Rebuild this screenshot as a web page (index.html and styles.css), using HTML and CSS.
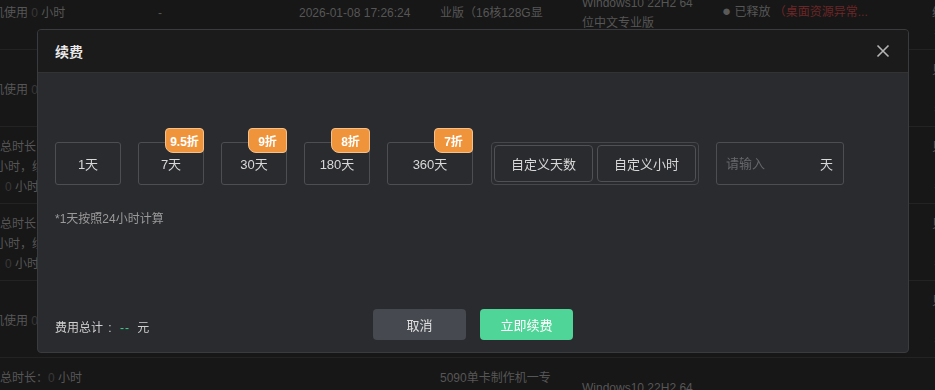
FILE: index.html
```html
<!DOCTYPE html>
<html lang="zh-CN">
<head>
    <meta charset="UTF-8">
    <meta name="viewport" content="width=device-width, initial-scale=1.0">
    <title>续费</title>
    <link rel="stylesheet" href="styles.css">
</head>
<body>
    <div class="table">
        <div class="row">
            <div class="cell c1"><span class="ln ln-cut">机使用 <span class="zero">0</span> 小时</span></div>
            <div class="cell c2">-</div>
            <div class="cell c3">2026-01-08 17:26:24</div>
            <div class="cell c4">5090单卡制作机一专<br>业版（16核128G显<br>&nbsp;</div>
            <div class="cell c5">Windows10 22H2 64<br>位中文专业版</div>
            <div class="cell c6"><span class="dot">●</span> 已释放 <span class="red">（桌面资源异常...</span></div>
            <div class="cell c7">贝<br>续<br>彳</div>
        </div>
        <div class="row">
            <div class="cell c1"><span class="ln ln-cut">机使用 <span class="zero">0</span> 小时</span></div>
            <div class="cell c2"></div>
            <div class="cell c3"></div>
            <div class="cell c4"></div>
            <div class="cell c5"></div>
            <div class="cell c6"></div>
            <div class="cell c7">贝<br>卜<br>彳</div>
        </div>
        <div class="row">
            <div class="cell c1">
                <span class="ln">总时长：<span class="zero">0</span> 小时</span>
                <span class="ln ln-cut2">小时，续费 0 小时</span>
                <span class="ln ln-in"><span class="zero">0</span> 小时，已使用</span>
            </div>
            <div class="cell c2"></div>
            <div class="cell c3"></div>
            <div class="cell c4"></div>
            <div class="cell c5"></div>
            <div class="cell c6"></div>
            <div class="cell c7">贝<br>卜<br>彳</div>
        </div>
        <div class="row">
            <div class="cell c1">
                <span class="ln">总时长：<span class="zero">0</span> 小时</span>
                <span class="ln ln-cut2">小时，续费 0 小时</span>
                <span class="ln ln-in"><span class="zero">0</span> 小时，已使用</span>
            </div>
            <div class="cell c2"></div>
            <div class="cell c3"></div>
            <div class="cell c4"></div>
            <div class="cell c5"></div>
            <div class="cell c6"></div>
            <div class="cell c7">贝<br>卜<br>彳</div>
        </div>
        <div class="row">
            <div class="cell c1"><span class="ln ln-cut">机使用 <span class="zero">0</span> 小时</span></div>
            <div class="cell c2"></div>
            <div class="cell c3"></div>
            <div class="cell c4"></div>
            <div class="cell c5"></div>
            <div class="cell c6"></div>
            <div class="cell c7">贝<br>卜<br>彳</div>
        </div>
        <div class="row">
            <div class="cell c1">
                <span class="ln">总时长：<span class="zero">0</span> 小时</span>
                <span class="ln ln-cut2">时，续费 0 小时</span>
                <span class="ln ln-in"><span class="zero">0</span> 小时，已使用</span>
            </div>
            <div class="cell c2"></div>
            <div class="cell c3"></div>
            <div class="cell c4">5090单卡制作机一专<br>业版（16核128G显<br>存）</div>
            <div class="cell c5">Windows10 22H2 64<br>位中文专业版</div>
            <div class="cell c6"><span class="dot">●</span> <span class="red">已释放（1台资源异常）</span></div>
            <div class="cell c7">贝</div>
        </div>
    </div>

    <div class="mask">
        <div class="dialog">
            <div class="dialog-header">
                <span class="dialog-title">续费</span>
                <button class="close">
                    <svg width="14" height="14" viewBox="0 0 14 14"><path d="M1.5 1.5 L12.5 12.5 M12.5 1.5 L1.5 12.5" stroke="#b5b5b5" stroke-width="1.6" fill="none"/></svg>
                </button>
            </div>

            <div class="dialog-body">
                <div class="options">
                    <div class="opt">1天</div>
                    <div class="opt">7天<span class="badge">9.5折</span></div>
                    <div class="opt">30天<span class="badge">9折</span></div>
                    <div class="opt">180天<span class="badge">8折</span></div>
                    <div class="opt opt-wide">360天<span class="badge">7折</span></div>
                    <div class="custom">
                        <div class="custom-btn">自定义天数</div>
                        <div class="custom-btn">自定义小时</div>
                    </div>
                    <div class="input-box">
                        <input type="text" placeholder="请输入">
                        <span class="unit">天</span>
                    </div>
                </div>
                <p class="note">*1天按照24小时计算</p>
            </div>

            <div class="dialog-footer">
                <div class="total">费用总计 : <span class="dash">--</span> 元</div>
                <div class="actions">
                    <button class="btn btn-cancel">取消</button>
                    <button class="btn btn-ok">立即续费</button>
                </div>
            </div>
        </div>
    </div>
</body>
</html>
```

FILE: styles.css
```css
body {
    margin: 0;
    width: 935px;
    height: 390px;
    overflow: hidden;
    background-color: #171717;
    font-family: "Liberation Sans", "Noto Sans CJK SC", sans-serif;
}
.table {
    margin-top: -27px;
}
.row {
    display: grid;
    grid-template-columns: 140px 159px 141px 142px 140px 207px 40px;
    height: 77px;
    border-bottom: 1px solid #232323;
    box-sizing: border-box;
    color: #565656;
    font-size: 12px;
    line-height: 20px;
}
.cell {
    display: flex;
    flex-direction: column;
    justify-content: center;
    white-space: nowrap;
    padding-top: 4px;
}
.c2 { padding-left: 18px; }
.c7 { padding-left: 3px; }
.ln { display: block; }
.ln-cut { margin-left: -8px; }
.ln-cut2 { margin-left: -4px; }
.ln-in { margin-left: 5px; }
.zero { color: #383838; }
.dot { color: #5a5a5a; font-size: 15px; }
.red { color: #6b2626; }
.c6 { display: block; align-self: center; padding-top: 0; }

.mask {
    position: fixed;
    inset: 0;
    padding: 29px 26px 0 37px;
}
.dialog {
    width: 872px;
    height: 324px;
    box-sizing: border-box;
    display: flex;
    flex-direction: column;
    background-color: #2a2b2f;
    border: 1px solid #3a3b3e;
    border-radius: 4px;
    overflow: hidden;
}
.dialog-header {
    height: 42px;
    flex-shrink: 0;
    display: flex;
    align-items: center;
    justify-content: space-between;
    padding: 0 18px 0 17px;
    background-color: #1b1b1b;
    border-bottom: 1px solid #333;
}
.dialog-title {
    color: #e8e8e8;
    font-size: 14px;
    font-weight: bold;
}
.close {
    background: transparent;
    border: none;
    padding: 0;
    width: 14px;
    height: 14px;
    display: flex;
}
.dialog-body {
    padding: 69px 17px 0 17px;
}
.options {
    display: flex;
    gap: 17px;
}
.opt {
    position: relative;
    width: 66px;
    height: 43px;
    box-sizing: border-box;
    border: 1px solid #4d4e52;
    border-radius: 3px;
    display: flex;
    align-items: center;
    justify-content: center;
    color: #d8d8d8;
    font-size: 13px;
}
.opt-wide { width: 86px; }
.badge {
    position: absolute;
    top: -15px;
    right: -1px;
    width: 39px;
    height: 25px;
    box-sizing: border-box;
    background-color: #f0943c;
    border: 1px solid #f6c08a;
    border-radius: 4px 4px 4px 8px;
    color: #fff;
    font-size: 12px;
    font-weight: bold;
    display: flex;
    align-items: center;
    justify-content: center;
}
.custom {
    display: flex;
    gap: 4px;
    padding: 2px;
    height: 43px;
    box-sizing: border-box;
    border: 1px solid #46474b;
    border-radius: 4px;
    margin-left: 1px;
}
.custom-btn {
    width: 99px;
    box-sizing: border-box;
    border: 1px solid #505155;
    border-radius: 4px;
    display: flex;
    align-items: center;
    justify-content: center;
    color: #d8d8d8;
    font-size: 13px;
}
.input-box {
    width: 128px;
    height: 43px;
    box-sizing: border-box;
    border: 1px solid #4d4e52;
    border-radius: 3px;
    display: flex;
    align-items: center;
    padding: 0 10px 0 9px;
}
.input-box input {
    width: 80px;
    background: transparent;
    border: none;
    outline: none;
    padding: 0;
    color: #ddd;
    font-size: 13px;
    font-family: inherit;
}
.input-box input::placeholder { color: #66676b; }
.unit {
    margin-left: auto;
    color: #d8d8d8;
    font-size: 13px;
}
.note {
    margin: 24px 0 0 0;
    color: #9a9a9a;
    font-size: 12px;
}
.dialog-footer {
    margin-top: auto;
    display: grid;
    grid-template-columns: 1fr auto 1fr;
    align-items: center;
    padding: 0 17px 12px 17px;
}
.total {
    color: #cfcfcf;
    font-size: 12px;
    padding-top: 3px;
    word-spacing: 2px;
}
.dash { color: #3ecf8e; margin: 0 2px 0 3px; letter-spacing: 1px; }
.actions {
    display: flex;
    gap: 14px;
}
.btn {
    width: 93px;
    height: 31px;
    border: none;
    border-radius: 4px;
    font-size: 13px;
    font-family: inherit;
}
.btn-cancel {
    background-color: #46494f;
    color: #e0e0e0;
}
.btn-ok {
    background-color: #4fd597;
    color: #fff;
}
```
